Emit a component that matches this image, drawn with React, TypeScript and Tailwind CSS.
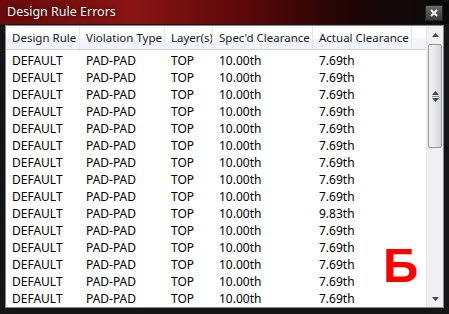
import React from "react";

const COLUMNS = [
  { label: "Design Rule", width: "w-[74px]" },
  { label: "Violation Type", width: "w-[85px]" },
  { label: "Layer(s)", width: "w-[48px]" },
  { label: "Spec'd Clearance", width: "w-[100px]" },
  { label: "Actual Clearance", width: "w-[99px]" },
];

const ACTUALS = [
  "7.69th", "7.69th", "7.69th", "7.69th", "7.69th",
  "7.69th", "7.69th", "7.69th", "7.69th", "9.83th",
  "7.69th", "7.69th", "7.69th", "7.69th", "7.69th",
];

export default function App() {
  return (
    <div
      className="w-[449px] h-[314px] flex flex-col overflow-hidden bg-[#151515]"
      style={{ fontFamily: '"Noto Sans", "Open Sans", sans-serif' }}
    >
      {/* Заголовок окна */}
      <div className="h-[24px] shrink-0 flex items-center justify-between pl-[7px] pr-[6px] bg-[linear-gradient(90deg,#6a0c0c_0%,#8a1414_30%,#5a0808_55%,#1a0505_80%,#0a0a0a_100%)]">
        <span className="text-[12.5px] text-[#f4f4f4] [text-shadow:0_0_4px_rgba(0,0,0,0.8)]">
          Design Rule Errors
        </span>
        <div className="w-[18px] h-[16px] mt-[2px] bg-[linear-gradient(180deg,#6a6a6a,#3a3a3a)] border border-[#222] flex items-center justify-center">
          <svg width="8" height="8" viewBox="0 0 8 8">
            <path d="M1 1 L7 7 M7 1 L1 7" stroke="#fff" strokeWidth="1.8" />
          </svg>
        </div>
      </div>

      <div className="flex-1 flex px-[5px] pb-[9px] pt-[1px]">
        <div className="flex-1 flex bg-white border border-[#828790]">
          <div className="flex-1 flex flex-col">
            {/* Шапка таблицы */}
            <div className="h-[24px] flex text-[11.5px] border-b border-[#d5d5d5] bg-[linear-gradient(180deg,#ffffff_0%,#ffffff_50%,#f3f6fb_51%,#eef3fa_100%)]">
              {COLUMNS.map((col) => (
                <div
                  key={col.label}
                  className={`${col.width} shrink-0 flex items-center pl-[6px] whitespace-nowrap overflow-hidden border-r border-[#dfe8f3] text-[#1a1a1a]`}
                >
                  {col.label}
                </div>
              ))}
              <div className="flex-1" />
            </div>

            <div className="flex flex-col pt-[2px] text-[12px] text-black relative">
              {ACTUALS.map((actual, i) => (
                <div key={i} className="h-[17px] flex items-center whitespace-nowrap">
                  <div className="w-[74px] pl-[6px]">DEFAULT</div>
                  <div className="w-[85px] pl-[6px]">PAD-PAD</div>
                  <div className="w-[48px] pl-[6px]">TOP</div>
                  <div className="w-[100px] pl-[6px]">10.00th</div>
                  <div className="w-[99px] pl-[6px]">{actual}</div>
                </div>
              ))}
              <span
                className="absolute left-[377px] top-[191px] text-[49px] font-bold leading-none text-[#ff0000]"
                style={{ fontFamily: '"Liberation Sans", Arial, sans-serif' }}
              >
                Б
              </span>
            </div>
          </div>

          {/* Полоса прокрутки */}
          <div className="w-[17px] shrink-0 flex flex-col bg-[#f0f0f0] border-l border-[#e6e6e6]">
            <div className="h-[17px] flex items-center justify-center">
              <svg width="7" height="4" viewBox="0 0 7 4">
                <path d="M0 4 L3.5 0 L7 4 Z" fill="#4a4a4a" />
              </svg>
            </div>
            <div className="h-[104px] mx-[1px] mt-[1px] rounded-[2px] border border-[#979797] bg-[linear-gradient(90deg,#f2f2f2,#e4e6e8_50%,#d4d7db)] flex items-center justify-center">
              <svg width="7" height="11" viewBox="0 0 7 11">
                <path d="M0 4 L3.5 0 L7 4 Z M0 7 L3.5 11 L7 7 Z" fill="#444" />
                <rect x="0" y="5" width="7" height="1" fill="#888" />
              </svg>
            </div>
            <div className="flex-1" />
            <div className="h-[17px] flex items-center justify-center">
              <svg width="7" height="4" viewBox="0 0 7 4">
                <path d="M0 0 L3.5 4 L7 0 Z" fill="#4a4a4a" />
              </svg>
            </div>
          </div>
        </div>
      </div>
    </div>
  );
}
